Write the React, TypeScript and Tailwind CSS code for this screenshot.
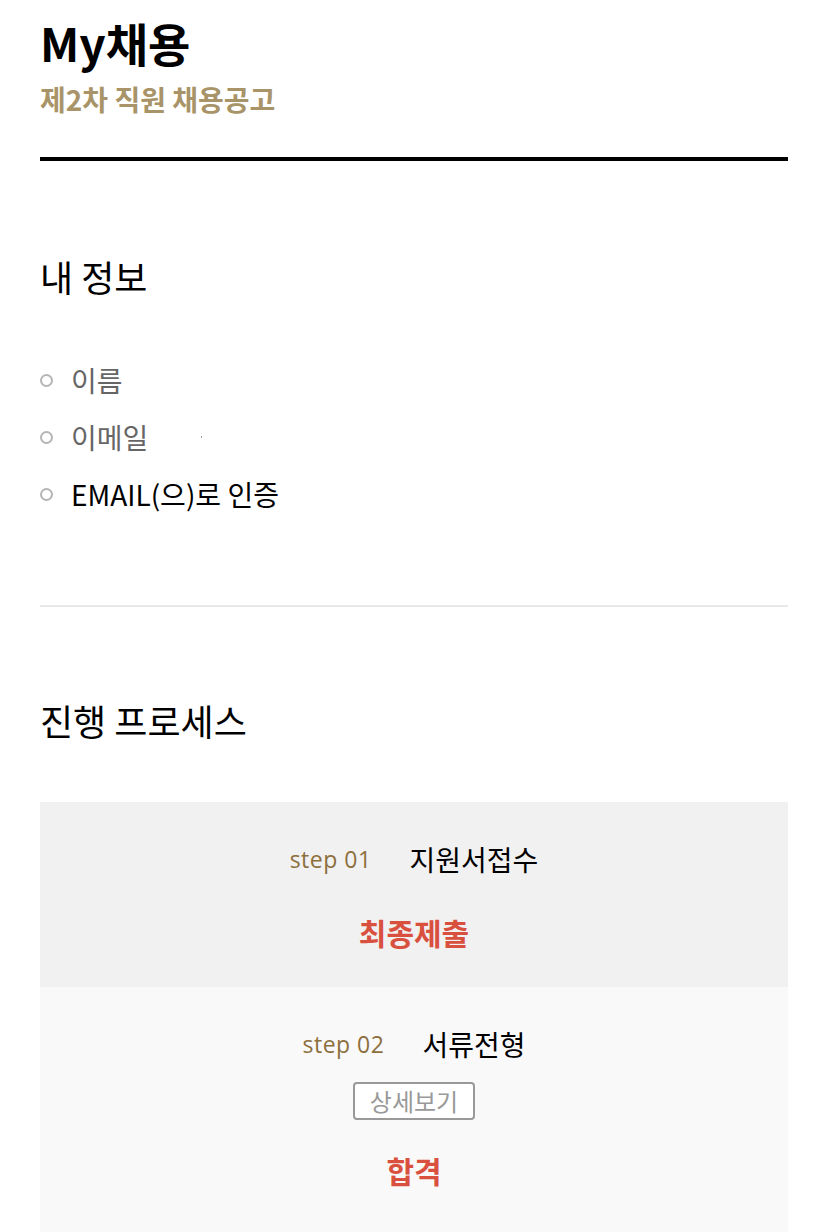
export default function App() {
  const font = { fontFamily: '"Noto Sans CJK KR", "Noto Sans", sans-serif' };
  const stepFont = { fontFamily: '"Open Sans", "Noto Sans", sans-serif' };
  return (
    <div className="min-h-screen bg-white px-[40px]" style={font}>
      {/* Header */}
      <div className="pt-[12px] pb-[38px] border-b-4 border-black">
        <h1 className="text-[46px] font-bold leading-[60px] text-black">My채용</h1>
        <p className="mt-[7px] text-[28px] font-bold leading-[40px] text-[#a89468]">제2차 직원 채용공고</p>
      </div>

      {/* My info */}
      <section className="pt-[91px] pb-[89px] border-b-2 border-[#e8e8e8]">
        <h2 className="text-[36px] leading-[48px] text-black">내 정보</h2>
        <ul className="mt-[58px] flex flex-col gap-[13px]">
          {[
            { label: "이름", color: "text-[#666666]" },
            { label: "이메일", color: "text-[#666666]", extra: true },
            { label: "EMAIL(으)로 인증", color: "text-black" },
          ].map((item) => (
            <li key={item.label} className="flex items-center h-[44px]">
              <span className="w-[13px] h-[13px] rounded-full border-2 border-[#b5b5b5] mr-[18px]"></span>
              <span className={`text-[28px] leading-[44px] ${item.color}`}>{item.label}</span>
              {item.extra && <span className="ml-[53px] w-[1px] h-[2px] bg-[#9a9a9a]"></span>}
            </li>
          ))}
        </ul>
      </section>

      {/* Process */}
      <section className="pt-[89px]">
        <h2 className="text-[36px] leading-[48px] text-black">진행 프로세스</h2>
        <div className="mt-[58px]">
          <div className="bg-[#f1f1f1] h-[185px] flex flex-col items-center pt-[37px]">
            <div className="flex items-center gap-[38px] h-[40px]">
              <span className="text-[23px] tracking-[0.5px] text-[#8c6f3d]" style={stepFont}>step 01</span>
              <span className="text-[28px] text-black">지원서접수</span>
            </div>
            <div className="mt-[33px] text-[30px] font-bold leading-[40px] text-[#d9503f]">최종제출</div>
          </div>
          <div className="bg-[#f9f9f9] h-[260px] flex flex-col items-center pt-[37px]">
            <div className="flex items-center gap-[38px] h-[40px]">
              <span className="text-[23px] tracking-[0.5px] text-[#8c6f3d]" style={stepFont}>step 02</span>
              <span className="text-[28px] text-black">서류전형</span>
            </div>
            <button className="mt-[18px] h-[38px] px-[15px] border-2 border-[#999999] rounded-[4px] text-[24px] leading-[32px] text-[#999999] bg-white">
              상세보기
            </button>
            <div className="mt-[30px] text-[30px] font-bold leading-[40px] text-[#d9503f]">합격</div>
          </div>
        </div>
      </section>
    </div>
  );
}
